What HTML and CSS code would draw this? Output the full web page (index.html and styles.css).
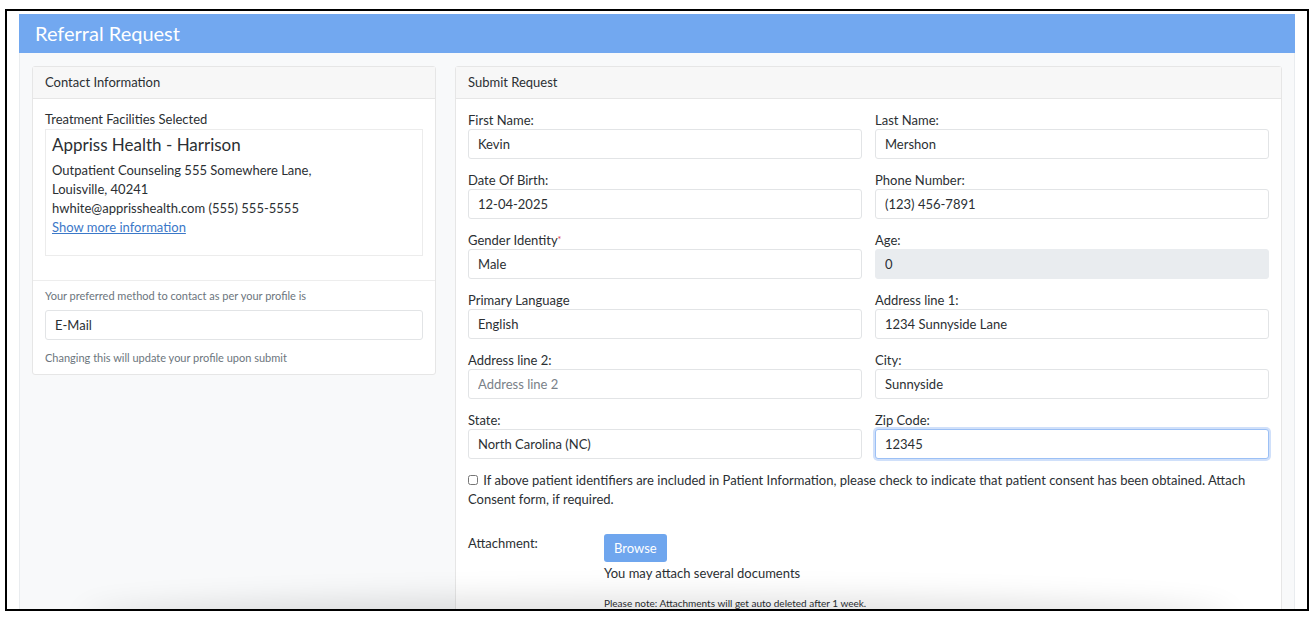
FILE: index.html
```html
<!DOCTYPE html>
<html lang="en">
<head>
    <meta charset="UTF-8">
    <meta name="viewport" content="width=device-width, initial-scale=1.0">
    <title>Referral Request</title>
    <link rel="stylesheet" href="styles.css">
</head>
<body>

    <div class="frame">
        <div class="page">
            <div class="page-title">Referral Request</div>

            <div class="columns">
                <!-- left column -->
                <div class="card contact-card">
                    <div class="card-header">Contact Information</div>
                    <div class="card-body">
                        <div class="small-title">Treatment Facilities Selected</div>
                        <div class="facility">
                            <div class="facility-name">Appriss Health - Harrison</div>
                            <div>Outpatient Counseling 555 Somewhere Lane,</div>
                            <div>Louisville, 40241</div>
                            <div>hwhite@apprisshealth.com (555) 555-5555</div>
                            <a href="#">Show more information</a>
                        </div>
                    </div>
                    <div class="card-body contact-method">
                        <p class="hint">Your preferred method to contact as per your profile is</p>
                        <input type="text" class="field" value="E-Mail">
                        <p class="hint">Changing this will update your profile upon submit</p>
                    </div>
                </div>

                <!-- right column -->
                <div class="card">
                    <div class="card-header">Submit Request</div>
                    <div class="card-body request-body">
                        <div class="form-grid">
                            <div>
                                <label>First Name:</label>
                                <input type="text" class="field" value="Kevin">
                            </div>
                            <div>
                                <label>Last Name:</label>
                                <input type="text" class="field" value="Mershon">
                            </div>
                            <div>
                                <label>Date Of Birth:</label>
                                <input type="text" class="field" value="12-04-2025">
                            </div>
                            <div>
                                <label>Phone Number:</label>
                                <input type="text" class="field" value="(123) 456-7891">
                            </div>
                            <div>
                                <label>Gender Identity<span class="req">*</span></label>
                                <input type="text" class="field" value="Male">
                            </div>
                            <div>
                                <label>Age:</label>
                                <input type="text" class="field" value="0" disabled>
                            </div>
                            <div>
                                <label>Primary Language</label>
                                <input type="text" class="field" value="English">
                            </div>
                            <div>
                                <label>Address line 1:</label>
                                <input type="text" class="field" value="1234 Sunnyside Lane">
                            </div>
                            <div>
                                <label>Address line 2:</label>
                                <input type="text" class="field" placeholder="Address line 2">
                            </div>
                            <div>
                                <label>City:</label>
                                <input type="text" class="field" value="Sunnyside">
                            </div>
                            <div>
                                <label>State:</label>
                                <input type="text" class="field" value="North Carolina (NC)">
                            </div>
                            <div>
                                <label>Zip Code:</label>
                                <input type="text" class="field focused" value="12345">
                            </div>
                        </div>

                        <p class="consent">
                            <input type="checkbox" class="check">
                            If above patient identifiers are included in Patient Information, please check to indicate that patient consent has been obtained. Attach Consent form, if required.
                        </p>

                        <div class="attach-row">
                            <div class="attach-label">Attachment:</div>
                            <div class="attach-side">
                                <button class="browse">Browse</button>
                                <div class="attach-text">You may attach several documents</div>
                                <div class="attach-note">Please note: Attachments will get auto deleted after 1 week.</div>
                            </div>
                        </div>
                    </div>
                </div>
            </div>
        </div>
        <div class="shade"></div>
    </div>

</body>
</html>
```

FILE: styles.css
```css
body {
    margin: 0;
    background-color: #ffffff;
    font-family: Lato, "Open Sans", sans-serif;
    color: #2b2f33;
}

.frame {
    position: relative;
    margin: 9px 5px 0 5px;
    width: 1304px;
    height: 602px;
    box-sizing: border-box;
    border: 2px solid #000;
    padding: 3px 12px 0 12px;
    overflow: hidden;
}

.page {
    background-color: #f8f9fa;
    border-left: 1px solid #e9ecef;
    border-right: 1px solid #e9ecef;
    height: 100%;
}

.page-title {
    background-color: #72a8f0;
    color: white;
    font-size: 20px;
    height: 39px;
    line-height: 39px;
    padding-left: 16px;
    margin: 0 -1px;
}

.columns {
    display: grid;
    grid-template-columns: 404px 1fr;
    gap: 19px;
    align-items: start;
    padding: 13px 12px 0 12px;
}

.card {
    background-color: #fff;
    border: 1px solid #e6e6e6;
    border-radius: 3px;
}

.card-header {
    background-color: #f7f7f7;
    border-bottom: 1px solid #e6e6e6;
    height: 31px;
    line-height: 30px;
    padding: 0 12px;
    font-size: 13px;
}

.card-body {
    padding: 12px 12px;
    font-size: 13px;
}

.small-title {
    line-height: 17px;
    margin-bottom: 1px;
}

.facility {
    border: 1px solid #ececec;
    height: 127px;
    box-sizing: border-box;
    padding: 4px 6px;
    line-height: 19px;
}

.facility-name {
    font-size: 17px;
    line-height: 22px;
    margin-bottom: 5px;
}

.facility a {
    color: #3b78c8;
    text-decoration: underline;
}

.contact-method {
    border-top: 1px solid #ededed;
    margin-top: 12px;
    padding-top: 7px;
    padding-bottom: 8px;
}

.hint {
    font-size: 11px;
    color: #6c757d;
    margin: 0;
    line-height: 16px;
}

.contact-method .field {
    margin: 6px 0 10px 0;
}

label {
    display: block;
    line-height: 16px;
    margin-bottom: 1px;
}

.req {
    color: #dc3545;
    font-size: 9px;
    vertical-align: top;
}

.field {
    display: block;
    width: 100%;
    height: 30px;
    box-sizing: border-box;
    border: 1px solid #e2e4e6;
    border-radius: 3px;
    padding: 0 9px;
    font-family: inherit;
    font-size: 13px;
    color: #2b2f33;
    background-color: #fff;
    outline: none;
}

.field::placeholder {
    color: #7a8188;
}

.field:disabled {
    background-color: #e9ecef;
    border-color: #e9ecef;
}

.field.focused {
    border-color: #9cc0f5;
    box-shadow: 0 0 0 2px rgba(120, 165, 240, 0.35);
}

.request-body {
    padding-top: 13px;
}

.form-grid {
    display: grid;
    grid-template-columns: 1fr 1fr;
    column-gap: 13px;
    row-gap: 13px;
}

.consent {
    margin: 12px 0 0 0;
    line-height: 19px;
}

.check {
    width: 10px;
    height: 10px;
    margin: 0 2px 0 0;
}

.attach-row {
    display: flex;
    margin-top: 25px;
}

.attach-label {
    width: 136px;
    padding-top: 1px;
}

.browse {
    background-color: #6fa6ee;
    color: white;
    border: none;
    border-radius: 3px;
    font-family: inherit;
    font-size: 13px;
    height: 28px;
    padding: 0 10px;
}

.attach-text {
    margin-top: 2px;
    line-height: 18px;
}

.attach-note {
    font-size: 10px;
    margin-top: 15px;
}

.shade {
    position: absolute;
    left: 80px;
    right: 80px;
    bottom: -30px;
    height: 30px;
    border-radius: 50%;
    box-shadow: 0 -6px 30px 6px rgba(0, 0, 0, 0.12);
}
```
